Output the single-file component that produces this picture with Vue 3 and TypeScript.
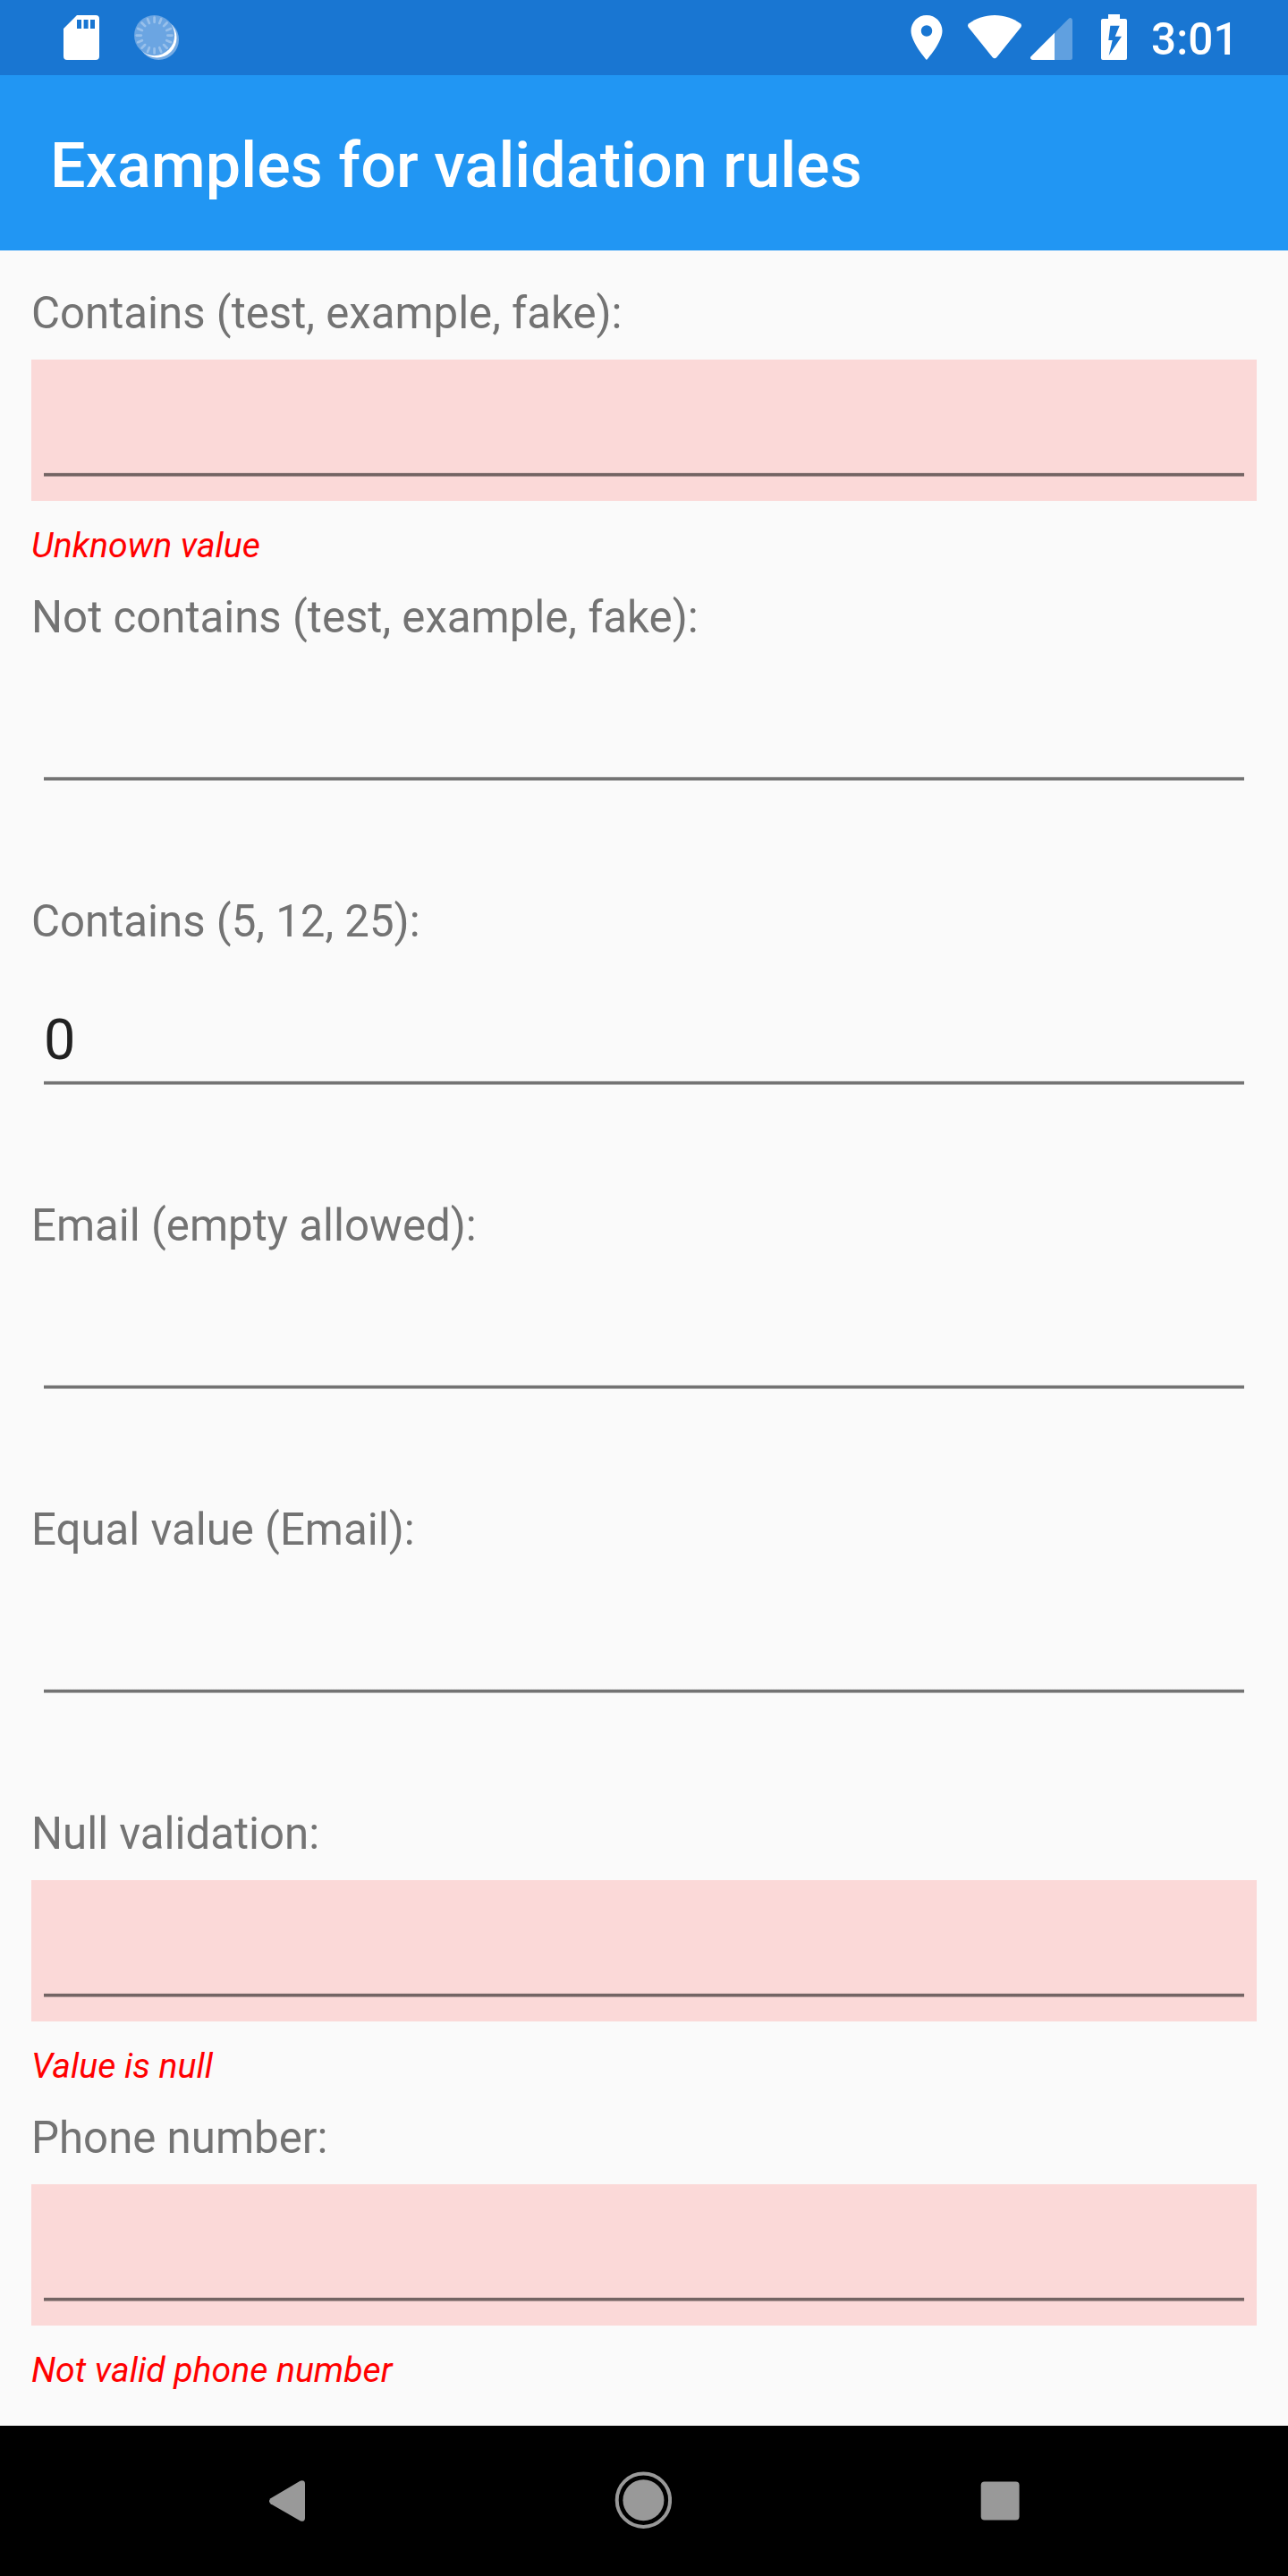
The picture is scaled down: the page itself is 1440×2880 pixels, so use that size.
<script setup lang="ts">
import { reactive } from 'vue'

interface Field {
  label: string
  value: string
  error: string
}

const fields = reactive<Field[]>([
  { label: 'Contains (test, example, fake):', value: '', error: 'Unknown value' },
  { label: 'Not contains (test, example, fake):', value: '', error: '' },
  { label: 'Contains (5, 12, 25):', value: '0', error: '' },
  { label: 'Email (empty allowed):', value: '', error: '' },
  { label: 'Equal value (Email):', value: '', error: '' },
  { label: 'Null validation:', value: '', error: 'Value is null' },
  { label: 'Phone number:', value: '', error: 'Not valid phone number' },
])

const ticks = Array.from({ length: 16 }, (_, i) => i * 22.5)
</script>

<template>
  <div class="screen">
    <header class="status">
      <svg class="sd" width="40" height="84" viewBox="71 0 40 84">
        <path fill="#fff" fill-rule="evenodd" d="M86 17H107a4 4 0 0 1 4 4V63a4 4 0 0 1-4 4H75a4 4 0 0 1-4-4V32ZM86 22V32H91V22ZM93.6 22V32H98.6V22ZM101 22V32H106V22Z" />
      </svg>
      <svg class="sync" width="50" height="84" viewBox="150 0 50 84">
        <circle cx="177.3" cy="44.3" r="22.7" fill="#75abe4" />
        <circle cx="175.4" cy="42.3" r="22.1" fill="#fff" />
        <circle cx="172.6" cy="39.6" r="22.6" fill="#6ba5e2" />
        <g stroke="#98c0eb" stroke-width="2.7" stroke-linecap="round">
          <line v-for="a in ticks" :key="a" x1="172.6" y1="19.7" x2="172.6" y2="24.8" :transform="`rotate(${a} 172.6 39.6)`" />
        </g>
      </svg>
      <svg class="pin" width="36" height="84" viewBox="1018 0 36 84">
        <path fill="#fff" fill-rule="evenodd" transform="translate(1006 12) scale(2.5)" d="M12 2C8.130 2 5 5.130 5 9c0 5.250 7 13 7 13s7-7.750 7-13c0-3.870-3.130-7-7-7zm0 9.500a2.500 2.500 0 0 1 0-5 2.500 2.500 0 0 1 0 5z" />
      </svg>
      <svg class="wifi" width="60" height="84" viewBox="1082 0 60 84">
        <path fill="#fff" d="M1112 17C1101 17 1091.500 20.500 1083.300 26.200Q1081.200 28 1082.700 30.400L1109.600 64Q1112 66.400 1114.400 64L1141.300 30.400Q1142.800 28 1140.700 26.200C1132.500 20.500 1123 17 1112 17Z" />
      </svg>
      <svg class="signal" width="47" height="84" viewBox="1152 0 47 84">
        <path fill="#60a0e0" d="M1179 36.800L1194.700 21Q1196 19.700 1197.500 20.200Q1199 20.800 1199 22.700V64.500Q1199 67 1196.500 67H1179Z" />
        <path fill="#fff" d="M1179 36.800V67H1154.500Q1152.600 67 1152 65.300Q1151.700 64 1152.800 63Z" />
      </svg>
      <svg class="battery" width="29" height="84" viewBox="1231 0 29 84">
        <path fill="#fff" fill-rule="evenodd" d="M1239 16H1252V21H1258Q1260 21 1260 23V65Q1260 67 1258 67H1233Q1231 67 1231 65V23Q1231 21 1233 21H1239ZM1241.300 28.700L1239.300 45H1243.700L1239.700 62L1254 40.700H1246.700L1251.700 28.700Z" />
      </svg>
      <span class="time">3:01</span>
    </header>

    <div class="appbar"><h1>Examples for validation rules</h1></div>

    <main class="form">
      <section v-for="f in fields" :key="f.label" class="field">
        <label class="label">{{ f.label }}</label>
        <div class="box" :class="{ invalid: f.error }">
          <input v-model="f.value" class="input" type="text" />
          <div class="underline"></div>
        </div>
        <p class="error">{{ f.error }}</p>
      </section>
    </main>

    <nav class="nav">
      <svg width="40" height="168" viewBox="301 2712 40 168">
        <path fill="#999" d="M302.500 2793.200L335.500 2773.800Q338 2772.500 339.800 2773.800Q341 2774.800 341 2777V2815Q341 2817.200 339.800 2818.200Q338 2819.500 335.500 2818.200L302.500 2799.300Q299.500 2796.300 302.500 2793.200Z" />
      </svg>
      <svg class="home" width="64" height="168" viewBox="687 2712 64 168">
        <circle cx="719.4" cy="2795.2" r="23" fill="#999" />
        <circle cx="719.4" cy="2795.2" r="29.7" fill="none" stroke="#999" stroke-width="4" />
      </svg>
      <svg class="recent" width="44" height="168" viewBox="1096 2712 44 168">
        <rect x="1096.7" y="2774.4" width="42.9" height="43" rx="4" fill="#999" />
      </svg>
    </nav>
  </div>
</template>

<style>
body {
  margin: 0;
}
</style>

<style scoped>
.screen {
  width: 1440px;
  height: 2880px;
  display: flex;
  flex-direction: column;
  overflow: hidden;
  background: #fafafa;
  font-family: Roboto, "Liberation Sans", sans-serif;
}
svg {
  display: block;
  flex: none;
}
.status {
  flex: none;
  display: flex;
  height: 84px;
  padding-left: 71px;
  background: #1976d2;
}
.sync {
  margin-left: 39px;
}
.pin {
  margin-left: 818px;
}
.wifi {
  margin-left: 28px;
}
.signal {
  margin-left: 10px;
}
.battery {
  margin-left: 32px;
}
.time {
  margin-left: 27px;
  color: #fff;
  font-size: 49.4px;
  font-weight: 500;
  letter-spacing: 0.1px;
  line-height: 88px;
}
.appbar {
  flex: none;
  height: 196px;
  padding-left: 56px;
  background: #2196f3;
}
h1 {
  margin: 0;
  color: #fff;
  font-size: 70px;
  font-weight: 500;
  letter-spacing: 0.09px;
  line-height: 202px;
}
.form {
  flex: 1;
  min-height: 0;
  padding: 35px 35px 0;
}
.field {
  height: 340px;
}
.label {
  display: block;
  height: 70px;
  margin-bottom: 17px;
  color: #737373;
  font-size: 49.2px;
  line-height: 70px;
}
.box {
  height: 158px;
  padding: 0 14px;
  box-sizing: border-box;
}
.box.invalid {
  background: #fbd9d8;
}
.input {
  display: block;
  width: 100%;
  height: 126px;
  box-sizing: border-box;
  padding: 35px 0 0;
  border: 0;
  outline: 0;
  background: transparent;
  color: #212121;
  font: 400 63px Roboto, "Liberation Sans", sans-serif;
}
.underline {
  height: 5px;
  background: linear-gradient(
    rgba(0, 0, 0, 0.07) 1px,
    rgba(0, 0, 0, 0.54) 1px 4px,
    rgba(0, 0, 0, 0.3) 4px
  );
}
.error {
  height: 60px;
  margin: 19px 0 0;
  color: #f00;
  font-size: 39.2px;
  font-style: italic;
  line-height: 63px;
}
.nav {
  flex: none;
  display: flex;
  height: 168px;
  padding-left: 301px;
  box-sizing: border-box;
  background: #000;
}
.home {
  margin-left: 346px;
}
.recent {
  margin-left: 345px;
}
</style>
